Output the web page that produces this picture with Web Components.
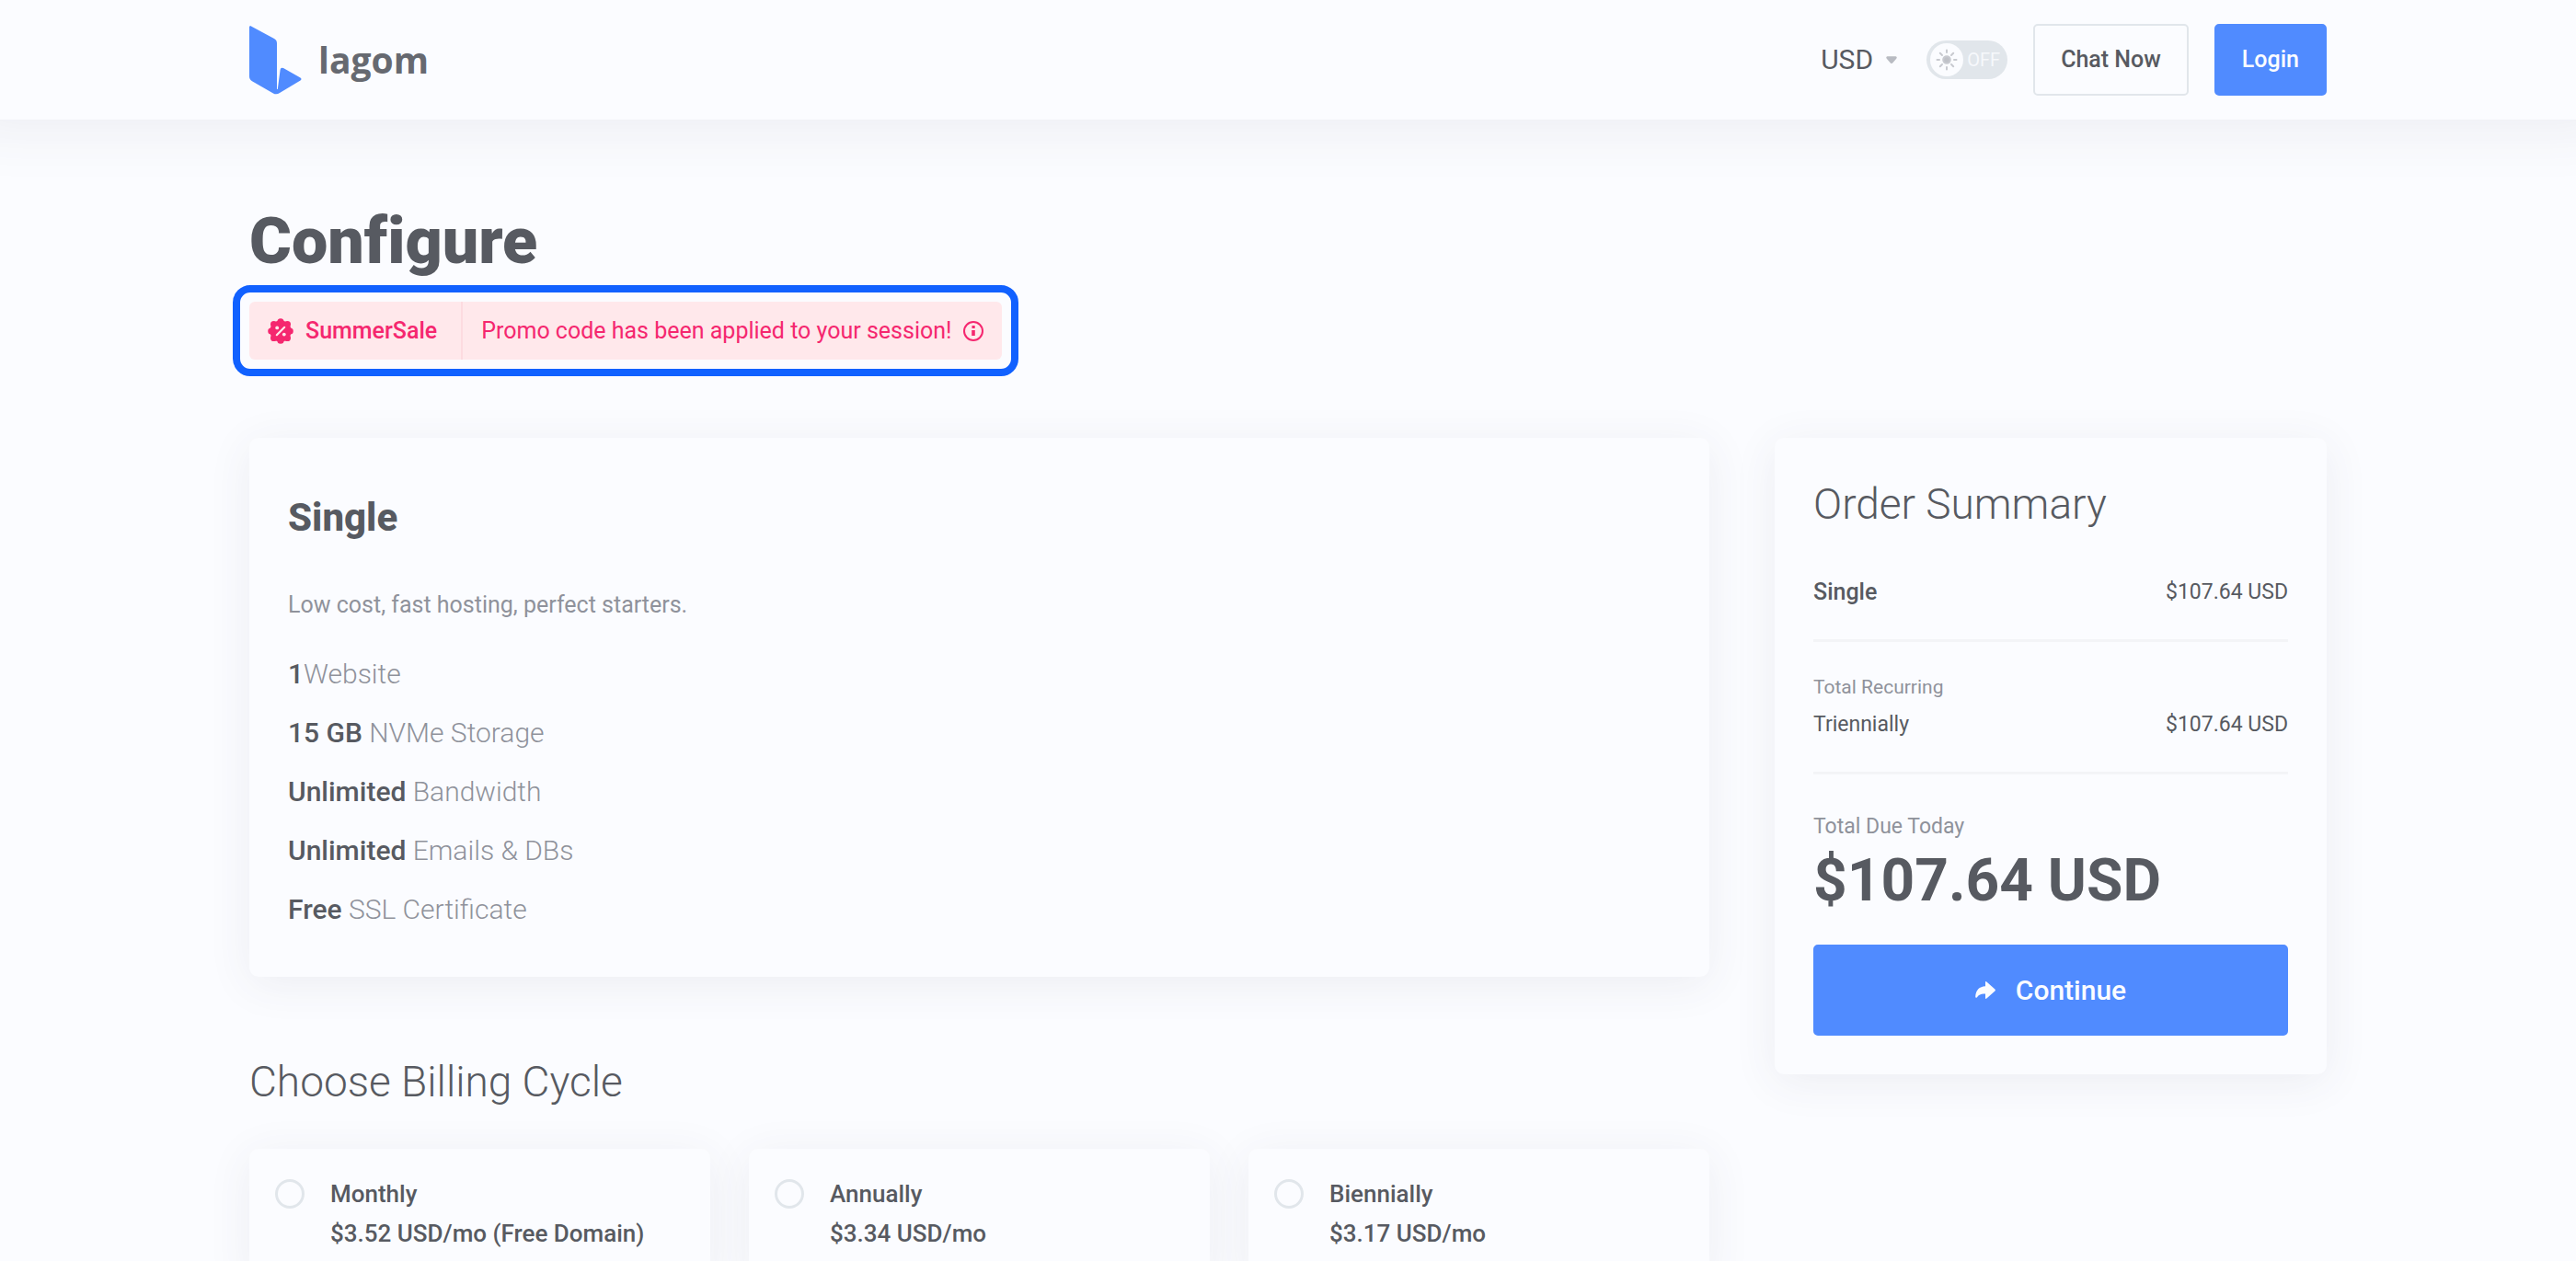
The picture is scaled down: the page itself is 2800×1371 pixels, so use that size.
<!DOCTYPE html>
<html lang="en">
<head>
<meta charset="utf-8">
<meta name="viewport" content="width=device-width, initial-scale=1">
<title>Configure</title>
<style>
  :root {
    --bg: #fbfcff;
    --ink: #575a61;
    --muted: #8f929b;
    --line: #f3f4f7;
    --edge: #e1e6eb;
    --primary: #508bff;
    --pink: #f5276f;
    --pink-soft: #ffe8eb;
    --focus: #1161ff;
    --shadow: 0 8px 48px rgba(60, 65, 85, .08);
    --wrap: min(100% - 80px, 2258px);
    scrollbar-width: none;
  }
  body {
    margin: 0;
    background: var(--bg);
    color: var(--ink);
    font: 400 25px/36px Roboto, "Liberation Sans", sans-serif;
  }
</style>
</head>
<body>
<lagom-app></lagom-app>

<script>
const define = (name, html) => {
  const tpl = document.createElement('template');
  tpl.innerHTML = html;
  customElements.define(name, class extends HTMLElement {
    constructor() {
      super();
      this.attachShadow({ mode: 'open' }).append(tpl.content.cloneNode(true));
    }
  });
};

define('lagom-logo', `
  <style>
    :host { display: block; }
    a { display: flex; align-items: center; gap: 18px; color: #666970; text-decoration: none; font: 700 39px/54px "Open Sans", "Noto Sans", sans-serif; }
    svg { display: block; fill: var(--primary); }
  </style>
  <a href="#">
    <svg width="57" height="75" viewBox="0 0 57 75" aria-hidden="true"><path d="M0 1.8C0 .4 1.2 0 2.4.7L27 14Q30 15.7 30 19V69h.8L33.6 48Q34 44.8 37 46L55.5 56.5Q57.5 58 55.5 59.5L33 73Q29.5 75.3 26 73.4L3 60.3Q0 58.5 0 55Z"/></svg>
    <span>lagom</span>
  </a>`);

define('currency-picker', `
  <style>
    :host { display: block; padding-right: 4px; }
    label { display: flex; align-items: center; gap: 14px; }
    select { appearance: none; border: 0; padding: 0; margin: 0; background: none; color: inherit; font: 400 30px/40px Roboto, sans-serif; }
    svg { display: block; fill: #b8bbc2; }
  </style>
  <label>
    <select aria-label="Currency"><option>USD</option></select>
    <svg width="12" height="9" viewBox="0 0 13 9" aria-hidden="true"><path d="M1.6 0H11.4Q13.6.6 12.2 2.6L8 7.6Q6.5 9.4 5 7.6L.8 2.6Q-.6.6 1.6 0Z"/></svg>
  </label>`);

define('theme-switch', `
  <style>
    :host { display: block; }
    label { position: relative; display: flex; align-items: center; gap: 4px; box-sizing: border-box; width: 88px; height: 42px; padding: 0 4px; border-radius: 21px; background: var(--edge); color: #f6f8fb; font-size: 20px; line-height: 24px; }
    input { position: absolute; inset: 0; margin: 0; width: 100%; height: 100%; opacity: 0; }
    .knob { display: grid; place-items: center; width: 36px; height: 36px; border-radius: 50%; background: var(--bg); }
    svg { display: block; fill: #bfc1c7; stroke: #c8cad0; stroke-width: 2; stroke-linecap: round; }
  </style>
  <label>
    <input type="checkbox" role="switch" aria-label="Dark mode">
    <span class="knob">
      <svg width="24" height="24" viewBox="0 0 24 24" aria-hidden="true"><circle cx="12" cy="12" r="3.8"/><path d="M12 1.500v2.500M12 20v2.500M1.500 12h2.500M20 12h2.500M4.800 4.800l2.200 2.200M17 17l2.200 2.200M4.800 19.200l2.200-2.200M17 7l2.200-2.200"/></svg>
    </span>
    <span>OFF</span>
  </label>`);

define('lagom-button', `
  <style>
    :host { display: block; }
    button { display: flex; align-items: center; justify-content: center; gap: 22px; box-sizing: border-box; width: 100%; height: 78px; margin: 0; padding: 0 28px; border: 2px solid var(--edge); border-radius: 5px; background: transparent; color: inherit; font: 500 25px/36px Roboto, sans-serif; }
    :host([primary]) button { border-color: var(--primary); background: var(--primary); color: var(--bg); }
    :host([large]) button { height: 99px; font-size: 30px; }
  </style>
  <button type="button"><slot name="icon"></slot><slot></slot></button>`);

define('site-header', `
  <style>
    :host { display: block; background: var(--bg); box-shadow: 0 -30px 60px 40px rgba(60, 65, 85, .08); }
    header { display: flex; align-items: center; justify-content: space-between; width: var(--wrap); height: 130px; margin: 0 auto; }
    nav { display: flex; align-items: center; gap: 28px; }
  </style>
  <header>
    <lagom-logo></lagom-logo>
    <nav>
      <currency-picker></currency-picker>
      <theme-switch></theme-switch>
      <lagom-button>Chat Now</lagom-button>
      <lagom-button primary>Login</lagom-button>
    </nav>
  </header>`);

define('promo-notice', `
  <style>
    :host { display: block; width: fit-content; margin-left: -18px; padding: 10px; border: 8px solid var(--focus); border-radius: 19px; }
    .bar { display: flex; align-items: stretch; height: 63px; border-radius: 6px; background: var(--pink-soft); color: var(--pink); }
    .part { display: flex; align-items: center; gap: 13px; padding: 0 20px; }
    .code { padding-right: 26px; border-right: 2px solid #fddbe0; font-weight: 500; }
    svg { display: block; }
  </style>
  <div class="bar">
    <div class="part code">
      <svg width="28" height="28" viewBox="0 0 28 28" aria-hidden="true">
        <g fill="var(--pink)"><circle cx="14" cy="14" r="11.600"/><circle cx="14" cy="3.800" r="3.600"/><circle cx="14" cy="24.200" r="3.600"/><circle cx="3.800" cy="14" r="3.600"/><circle cx="24.200" cy="14" r="3.600"/><circle cx="6.600" cy="6.600" r="3.600"/><circle cx="21.400" cy="6.600" r="3.600"/><circle cx="6.600" cy="21.400" r="3.600"/><circle cx="21.400" cy="21.400" r="3.600"/></g>
        <path d="M9.800 18.200l8.400-8.400" stroke="var(--pink-soft)" stroke-width="2.200" stroke-linecap="round"/>
        <g fill="var(--pink-soft)"><circle cx="10.200" cy="10.400" r="1.900"/><circle cx="17.800" cy="17.600" r="1.900"/></g>
      </svg>
      <slot name="code"></slot>
    </div>
    <div class="part">
      <slot></slot>
      <svg width="22" height="22" viewBox="0 0 22 22" aria-hidden="true"><circle cx="11" cy="11" r="10" fill="none" stroke="var(--pink)" stroke-width="2"/><path d="M9.500 5h3.200v3h-3.200zM9.200 10h3.600v6H9.200z" fill="var(--pink)"/></svg>
    </div>
  </div>`);

define('lagom-card', `
  <style>
    :host { display: block; border-radius: 10px; background: var(--bg); box-shadow: var(--shadow); }
  </style>
  <slot></slot>`);

define('product-info', `
  <style>
    :host { display: block; padding: 62px 42px 41px; }
    h2 { margin: 0 0 52px; font-weight: 800; font-size: 42px; line-height: 50px; }
    p { margin: 0 0 25px; color: var(--muted); }
    ul { margin: 0; padding: 0; list-style: none; color: var(--muted); font-weight: 300; font-size: 30px; line-height: 64px; }
    b { color: var(--ink); font-weight: 500; }
  </style>
  <h2>Single</h2>
  <p>Low cost, fast hosting, perfect starters.</p>
  <ul>
    <li><b>1</b>Website</li>
    <li><b>15 GB</b> NVMe Storage</li>
    <li><b>Unlimited</b> Bandwidth</li>
    <li><b>Unlimited</b> Emails &amp; DBs</li>
    <li><b>Free</b> SSL Certificate</li>
  </ul>`);

define('cycle-option', `
  <style>
    :host { display: block; }
    label { display: flex; align-items: flex-start; gap: 28px; padding: 28px; font-weight: 500; font-size: 26px; line-height: 43px; }
    input { appearance: none; flex: none; box-sizing: border-box; width: 32px; height: 32px; margin: 5px 0 0; border: 3px solid var(--edge); border-radius: 50%; }
    input:checked { border: 10px solid var(--primary); }
    .text { display: flex; flex-direction: column; }
  </style>
  <label>
    <input type="radio" name="cycle">
    <span class="text"><slot name="name"></slot><slot name="price"></slot></span>
  </label>`);

define('billing-cycles', `
  <style>
    :host { display: block; }
    h2 { margin: 0 0 45px; font-weight: 300; font-size: 46px; line-height: 56px; }
    .row { display: grid; grid-template-columns: repeat(3, 1fr); gap: 42px; }
  </style>
  <h2>Choose Billing Cycle</h2>
  <div class="row">
    <lagom-card><cycle-option><span slot="name">Monthly</span><span slot="price">$3.52 USD/mo (Free Domain)</span></cycle-option></lagom-card>
    <lagom-card><cycle-option><span slot="name">Annually</span><span slot="price">$3.34 USD/mo</span></cycle-option></lagom-card>
    <lagom-card><cycle-option><span slot="name">Biennially</span><span slot="price">$3.17 USD/mo</span></cycle-option></lagom-card>
  </div>`);

define('order-summary', `
  <style>
    :host { display: block; padding: 44px 42px 42px; }
    h2 { margin: 0 0 50px; font-weight: 300; font-size: 46px; line-height: 56px; }
    .row { display: flex; justify-content: space-between; font-size: 23px; line-height: 36px; }
    b { font-weight: 500; font-size: 25px; }
    hr { height: 3px; margin: 33px 0; border: 0; background: var(--line); }
    .label { margin-bottom: 7px; color: var(--muted); font-size: 21px; line-height: 32px; }
    .due { margin-top: 41px; font-size: 23px; }
    .total { margin-bottom: 33px; font-weight: 700; font-size: 64px; line-height: 72px; }
    svg { display: block; fill: var(--bg); }
  </style>
  <h2>Order Summary</h2>
  <div class="row"><b>Single</b><span>$107.64 USD</span></div>
  <hr>
  <div class="label">Total Recurring</div>
  <div class="row"><span>Triennially</span><span>$107.64 USD</span></div>
  <hr>
  <div class="label due">Total Due Today</div>
  <div class="total">$107.64 USD</div>
  <lagom-button primary large>
    <svg slot="icon" width="22" height="19" viewBox="0 0 22 19" aria-hidden="true"><path d="M11 1Q11-.6 12.4.5L21.4 8.4Q22.4 9.5 21.4 10.6L12.4 18.5Q11 19.6 11 18V13.6C6.500 13.200 4 14.500 2 17.200Q.4 18.800.2 16.500C.6 9.500 4.500 5.600 11 5.300Z"/></svg>
    Continue
  </lagom-button>`);

define('lagom-app', `
  <style>
    :host { display: block; height: 100vh; overflow: auto; scrollbar-width: none; }
    main { width: var(--wrap); margin: 0 auto; padding: 90px 0 60px; }
    h1 { margin: 0 0 6px; font-weight: 900; font-size: 70px; line-height: 84px; font-variant-ligatures: none; }
    .cols { display: flex; align-items: flex-start; gap: 71px; margin-top: 67px; }
    .main { display: flex; flex: 1; flex-direction: column; gap: 86px; min-width: 0; }
    .side { flex: 0 0 600px; }
  </style>
  <site-header></site-header>
  <main>
    <h1>Configure</h1>
    <promo-notice><span slot="code">SummerSale</span>Promo code has been applied to your session!</promo-notice>
    <div class="cols">
      <div class="main">
        <lagom-card><product-info></product-info></lagom-card>
        <billing-cycles></billing-cycles>
      </div>
      <aside class="side"><lagom-card><order-summary></order-summary></lagom-card></aside>
    </div>
  </main>`);
</script>
</body>
</html>
